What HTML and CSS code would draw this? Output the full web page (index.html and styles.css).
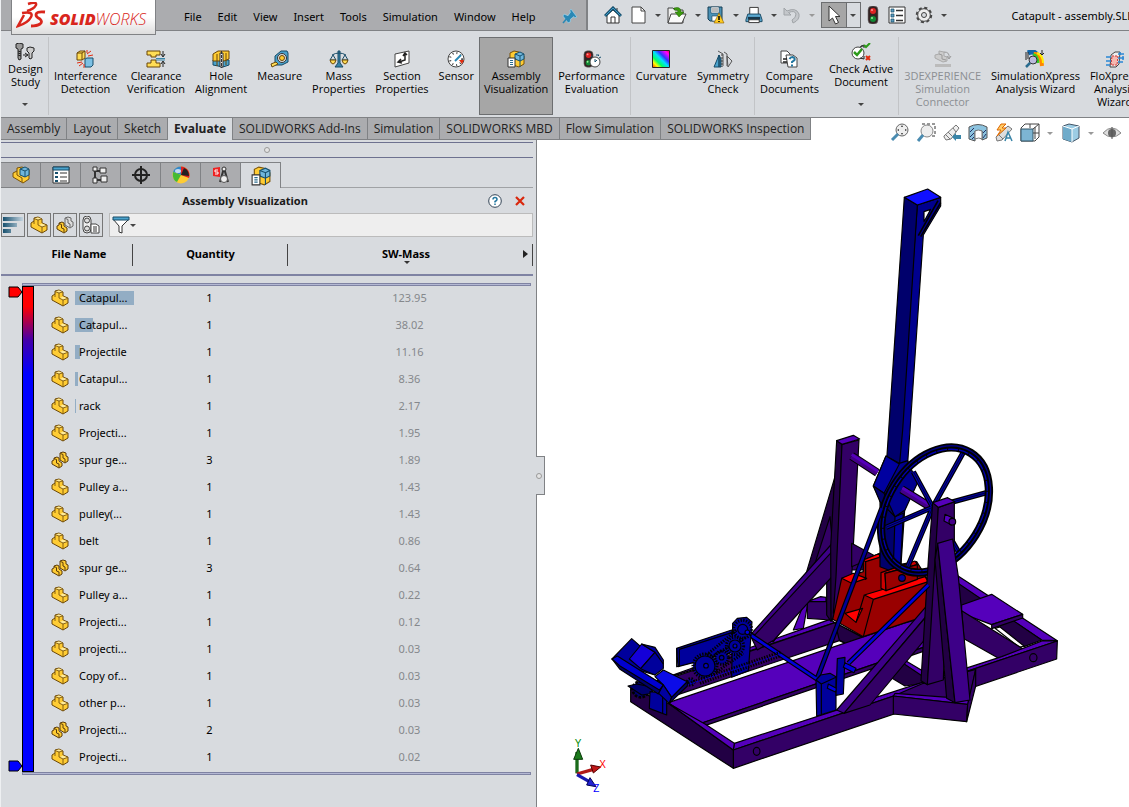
FILE: index.html
```html
<!DOCTYPE html>
<html lang="en">
<head>
    <meta charset="UTF-8">
    <title>Catapult - assembly</title>
    <link rel="stylesheet" href="styles.css">
</head>
<body>

<!-- shared icons -->
<svg class="defs" aria-hidden="true">
    <symbol id="part" viewBox="0 0 18 18">
        <path d="M1 7l3-2V2l4-1 4 2v4l5 2v5l-5 3L1 11z" fill="#fc3" stroke="#6b4708" stroke-linejoin="round"/>
        <path d="M4 2.500l4-1 3.500 1.500L8 4z M12 11l-3-2 3-1.500 4.500 2z" fill="#ffeb99"/>
        <path d="M4 2.500L8 4v5l4 2v5.500M8 4l3.500-1M12 11l4.500-1.500M4 5v3" fill="none" stroke="#6b4708" stroke-width=".8"/>
    </symbol>
    <symbol id="parts" viewBox="0 0 18 18">
        <path d="M9 5V2l3-1 3 1v3l2 1v4l-3 2-5-3z" fill="#fc3" stroke="#5c3c08"/>
        <path d="M1 10l2-1V7l3-1 2 1v3l3 2v3l-3 2-7-4z" fill="#fc3" stroke="#5c3c08"/>
        <path d="M3 7.500l2.500 1V12L8 13v3M9.500 2.500l2.500 1V7l2 1v3" fill="none" stroke="#5c3c08"/>
    </symbol>
    <symbol id="assembly" viewBox="0 0 18 18">
        <path d="M1 7l4-2V2l5-1 7 3v9l-6 4L1 11z" fill="#fc3" stroke="#7a5208"/>
        <path d="M5 5v4l5 3v4" fill="none" stroke="#7a5208"/>
        <path d="M8 3l5-2 4 2v6l-4 2-5-2z" fill="#6fb6dc" stroke="#17506e"/>
        <path d="M8 3l5 2 4-2M13 5v6" fill="none" stroke="#17506e"/>
    </symbol>
    <symbol id="visual" viewBox="0 0 18 18">
        <path d="M3 8V3l4-2 5 1 5 4v8l-5 3-6-2z" fill="#fc3" stroke="#7a5208"/>
        <path d="M8 4l5-2 4 2v5l-4 2-5-2z" fill="#6fb6dc" stroke="#17506e"/>
        <path d="M8 4l5 2 4-2M13 6v11" fill="none" stroke="#17506e"/>
        <path d="M1 8h7v9H1z" fill="#fff" stroke="#333"/>
        <path d="M3 10.500h3M3 12.500h3M3 14.500h3" stroke="#2a6c8f"/>
    </symbol>
    <symbol id="list" viewBox="0 0 18 18">
        <path d="M1 1h16v16H1z" fill="#fff" stroke="#333"/>
        <path d="M3 3h3v3H3zM3 8h3v3H3zM3 13h3v3H3z" fill="#5b9bc0" stroke="#164a66" stroke-width=".7"/>
        <path d="M8 4.500h7M8 9.500h7M8 14.500h7" stroke="#333" stroke-width="1.300"/>
    </symbol>
    <symbol id="light" viewBox="0 0 12 18">
        <rect x="1" y="0" width="10" height="18" rx="4" fill="#322" stroke="#777" stroke-width=".6"/>
        <circle cx="6" cy="5" r="3" fill="#d22"/><circle cx="5" cy="4" r="1" fill="#f99"/>
        <circle cx="6" cy="13" r="3" fill="#183"/><circle cx="5" cy="12" r="1" fill="#9e9"/>
    </symbol>
</svg>

<div class="app">
    <header class="titlebar">
        <nav class="menu">
            <a class="logo" href="#">
                <svg width="32" height="30" viewBox="0 0 32 30" fill="none" stroke="#d9261c" aria-hidden="true">
                    <path d="M12 2Q21 -1 20 3Q18 7 11 9" stroke-width="2.500"/>
                    <path d="M6 11Q18 9 15 15Q12 21 2 24L8 13" stroke-width="2.500"/>
                    <path d="M29 10Q20 9 20 13Q20 15 24 17Q27 20 24 22Q21 24 15 24" stroke-width="2.800"/>
                </svg>
                <span class="wordmark"><b>SOLID</b>WORKS</span>
            </a>
            <a href="#">File</a><a href="#">Edit</a><a href="#">View</a><a href="#">Insert</a><a href="#">Tools</a><a href="#">Simulation</a><a href="#">Window</a><a href="#">Help</a>
            <button class="pin" aria-label="Pin menu">
                <svg width="16" height="16" viewBox="0 0 16 16"><path d="M8 1l7 7-2 1-1-1-3 3v3l-2 1-6-6 1-2 4 1 2-4-1-1z" transform="rotate(8 8 8)" fill="#2a88b5" stroke="#9fdcf5" stroke-width=".6"/><path d="M1 15l5-6" stroke="#2a88b5" stroke-width="1.500"/></svg>
            </button>
        </nav>
        <div class="quick">
            <button aria-label="Home"><svg width="18" height="18" viewBox="0 0 18 18"><path d="M3 9v8h12V9L9 4z" fill="#fff" stroke="#333"/><path d="M7 17v-6h4v6M13 2v4" fill="none" stroke="#333"/><path d="M1 10l8-8 8 8" fill="none" stroke="#17506e" stroke-width="3"/><path d="M1.500 9.500L9 2l7.500 7.500" fill="none" stroke="#3c9bc9"/></svg></button>
            <button class="drop" aria-label="New"><svg width="16" height="18" viewBox="0 0 16 18"><path d="M1 1h9l4 4v12H1z" fill="#fff" stroke="#444"/><path d="M10 1v4h4" fill="none" stroke="#444"/></svg></button>
            <button class="drop" aria-label="Open"><svg width="20" height="18" viewBox="0 0 20 18"><path d="M1 17V2h5l2 2h8v13z" fill="#eee" stroke="#444"/><path d="M4 8h15l-4 9H1z" fill="#fafafa" stroke="#444"/><path d="M7 2q7-2 7 4h3l-5 5-4-5h3q0-3-4-2z" fill="#3b9b0c" stroke="#1d5c04" stroke-width=".5"/></svg></button>
            <button class="drop" aria-label="Save"><svg width="18" height="18" viewBox="0 0 18 18"><path d="M1 1h14v14H3l-2-2z" fill="#4a91b5" stroke="#173e55"/><path d="M4 1h8v6H4zM5 10h6v5H5z" fill="#fff" stroke="#173e55" stroke-width=".6"/><path d="M5 3h6M5 5h6" stroke="#777"/><path d="M12 7l5 10H7z" fill="#fc2" stroke="#8c5d00" stroke-width=".6"/><path d="M12 10v4M12 15v1" stroke="#000" stroke-width="1.500"/></svg></button>
            <button class="drop" aria-label="Print"><svg width="18" height="18" viewBox="0 0 19 18"><path d="M5 8V1h9v7" fill="#fff" stroke="#333"/><path d="M1 14l2-6h13l2 6v2H1z" fill="#5ba9d0" stroke="#174760"/><path d="M3 11h13v3H3z" fill="#17384c"/><path d="M4 14h11v3H4z" fill="#fff" stroke="#333"/></svg></button>
            <button class="drop off" aria-label="Undo"><svg width="18" height="18" viewBox="0 0 18 18"><path d="M1 2v7h7L5.500 6.500Q12 4 13 8q0 4-4 6l1 3q7-3 6-9Q13 1 4 5z" fill="#c4c7cb" stroke="#a0a4a8"/></svg></button>
            <button class="drop select" aria-label="Select"><svg width="16" height="20" viewBox="0 0 16 20"><path d="M3 1v15l3.500-3 3 6 3-1.500-3-6H14z" fill="#fff" stroke="#333"/></svg></button>
            <button aria-label="Rebuild"><svg width="12" height="18"><use href="#light"/></svg></button>
            <button aria-label="File properties"><svg width="18" height="18"><use href="#list"/></svg></button>
            <button class="drop" aria-label="Options"><svg width="18" height="18" viewBox="0 0 18 18"><circle cx="9" cy="9" r="7" fill="none" stroke="#444" stroke-width="2.500" stroke-dasharray="3 2.500"/><circle cx="9" cy="9" r="6.300" fill="#eee" stroke="#444"/><circle cx="9" cy="9" r="2.500" fill="#d8dbdf" stroke="#444"/></svg></button>
        </div>
        <span class="doc">Catapult - assembly.SLD</span>
    </header>

    <div class="ribbon">
        <button class="tool more"><svg width="20" height="18" viewBox="0 0 20 18"><path d="M1 1l3-1 4 1v4L6 6v10l-2 1-1-2V6L1 5z" fill="#999" stroke="#222"/><path d="M12 5l3-1 4 1v3l-2 2v5l-2 1-1-1v-5l-2-2z" fill="#ccc" stroke="#222"/><path d="M3 8l3 1M3 10l3 1M3 12l3 1M8 12h5M10 10l3 2-3 2" fill="none" stroke="#222"/></svg><span>Design<br>Study</span></button>
        <i class="sep"></i>
        <button class="tool"><svg width="18" height="18" viewBox="0 0 18 18"><path d="M1 3l3-2h5v7l-3 2H1z" fill="#fd5" stroke="#6b4708"/><path d="M9 9l2-1h6v7l-2 2H9z" fill="#7cc0e4" stroke="#174f6c"/><path d="M1 3h5v7M6 3l3-2" fill="none" stroke="#6b4708"/><path d="M12 6l5-1M11 4l4-3M11 3V0M6 12l-5 1M7 13l-4 3M8 14v4" stroke="#e22c10"/></svg><span>Interference<br>Detection</span></button>
        <button class="tool"><svg width="20" height="18" viewBox="0 0 20 18"><path d="M1 1h13v4h-4v2H5V5H1zM1 17h13v-4h-4v-3H5v3H1z" fill="#fd5" stroke="#6b4708"/><path d="M10 8.500h9M10 10h9" stroke="#3a85a8"/><path d="M17 1v5M17 12v5M15 4l2 3 2-3M15 14l2-3 2 3" fill="none" stroke="#222"/></svg><span>Clearance<br>Verification</span></button>
        <button class="tool"><svg width="18" height="18" viewBox="0 0 18 18"><path d="M1 10h16v5l-6 2-10-2z" fill="#4ba3cd" stroke="#164a66"/><path d="M1 4l5-3h11v8l-5 2H1z" fill="#fc3" stroke="#6b4708"/><path d="M5 4v12M14 3v12" stroke="#6b4708"/><path d="M8 3h3v14H8z" fill="#eee" stroke="#333"/><path d="M9.500 1v17" stroke="#333" stroke-dasharray="3 1"/></svg><span>Hole<br>Alignment</span></button>
        <button class="tool"><svg width="20" height="18" viewBox="0 0 20 18"><path d="M5 6l6-5h6l1 2v9l-6 3H5z" fill="#4ba3cd" stroke="#164a66"/><circle cx="12" cy="8" r="4.500" fill="#ddd" stroke="#333"/><circle cx="12" cy="8" r="2.500" fill="#fc3" stroke="#6b4708"/><path d="M1 14l5-2 2 2-6 3z" fill="#fd5" stroke="#6b4708"/></svg><span>Measure</span></button>
        <button class="tool"><svg width="20" height="18" viewBox="0 0 20 18"><path d="M9 1h2v12l3 4H6l3-4z" fill="#3a85a8" stroke="#164a66"/><path d="M3 5q7-4 14 0M4 5L1 10h6zM16 5l-3 5h6z" fill="none" stroke="#164a66"/><path d="M1 10h6q-1 4-3 4t-3-4zM13 10h6q-1 4-3 4t-3-4z" fill="#fd5" stroke="#6b4708"/></svg><span>Mass<br>Properties</span></button>
        <button class="tool"><svg width="18" height="18" viewBox="0 0 18 18"><path d="M2 4l14-3v12L2 17z" fill="#fff" stroke="#444"/><path d="M12 4v6l-6 2M10 6l2-3 2 2M8 9l-3 3 4 1" fill="none" stroke="#222" stroke-width="1.500"/></svg><span>Section<br>Properties</span></button>
        <button class="tool"><svg width="18" height="18" viewBox="0 0 18 18"><circle cx="9" cy="9" r="8" fill="#fff" stroke="#444"/><circle cx="9" cy="9" r="6" fill="none" stroke="#444" stroke-width="2" stroke-dasharray="1 3"/><path d="M12 10h5l-2 4z" fill="#e22c10"/><path d="M8 11l6-6" stroke="#2a88b5" stroke-width="2"/></svg><span>Sensor</span></button>
        <button class="tool on"><svg width="20" height="18"><use href="#visual"/></svg><span>Assembly<br>Visualization</span></button>
        <button class="tool"><svg width="18" height="18" viewBox="0 0 18 18"><svg x="0" y="0" width="11" height="18"><use href="#light"/></svg><circle cx="12" cy="12" r="5" fill="#fff" stroke="#444"/><path d="M12 9v3l2-2M9 7L8 6M15 6l1-1h-3M16 8l2-1" fill="none" stroke="#17506e"/></svg><span>Performance<br>Evaluation</span></button>
        <i class="sep"></i>
        <button class="tool"><svg width="18" height="18" viewBox="0 0 18 18"><defs><linearGradient id="rainbow" x1="1" y1="0" x2="0" y2="1"><stop offset="0" stop-color="#f03"/><stop offset=".15" stop-color="#f0f"/><stop offset=".35" stop-color="#33f"/><stop offset=".5" stop-color="#0df"/><stop offset=".68" stop-color="#0f6"/><stop offset=".82" stop-color="#ff0"/><stop offset="1" stop-color="#f30"/></linearGradient></defs><path d="M.5.500h17v17H.5z" fill="url(#rainbow)" stroke="#222"/></svg><span>Curvature</span></button>
        <button class="tool"><svg width="20" height="18" viewBox="0 0 20 18"><path d="M1 17l5-12v12z" fill="#4ba3cd" stroke="#164a66"/><path d="M6 5l2 4v8H6z" fill="#2a6c8f" stroke="#164a66"/><path d="M9 4v13" stroke="#333" stroke-dasharray="2 1"/><path d="M5 1l5 3v12M11 2l3 2v12M14 6l5 5-4 6z" fill="none" stroke="#555"/></svg><span>Symmetry<br>Check</span></button>
        <i class="sep"></i>
        <button class="tool"><svg width="18" height="18" viewBox="0 0 18 18"><path d="M1 1h6l3 3v9H1z" fill="#fff" stroke="#444"/><path d="M6 5h7l4 3v9H8z" fill="#fff" stroke="#444"/><path d="M3 9h4M3 12h4" stroke="#222" stroke-width="1.500"/><path d="M9.500 9q1-2 3-2 3 1 2 3l-2.500 2v1M12 14.500v2" fill="none" stroke="#2377a0" stroke-width="2"/></svg><span>Compare<br>Documents</span></button>
        <button class="tool more"><svg width="20" height="18" viewBox="0 0 20 18"><circle cx="7" cy="10" r="6" fill="#fff" stroke="#444"/><path d="M3 9l3 3 5-6" fill="none" stroke="#2c9a1a" stroke-width="2.500"/><path d="M9 4l4-2M10 3h3v2M9 15l4 1v-3" fill="none" stroke="#222"/><path d="M13 2l2 2 4-4" fill="none" stroke="#2c9a1a" stroke-width="2"/><path d="M15 13l4 4M19 13l-4 4" stroke="#e22c10" stroke-width="2"/></svg><span>Check Active<br>Document</span></button>
        <i class="sep"></i>
        <button class="tool" disabled><svg width="18" height="18" viewBox="0 0 18 18"><path d="M1 5l4-1V1l5 1v4l3 1v4l-4 1-8-4z" fill="#ccc" stroke="#aaa"/><path d="M5 4l3 1v4l4 1M10 2q6 0 5 6M13 6l2 3 2-3" fill="none" stroke="#999"/><path d="M1 14h16v3H1z" fill="#bbb"/></svg><span>3DEXPERIENCE<br>Simulation<br>Connector</span></button>
        <button class="tool"><svg width="20" height="18" viewBox="0 0 20 18"><path d="M3 3q6-3 9 2" fill="none" stroke="#16a" stroke-width="5"/><path d="M9 4q7-1 8 12" fill="none" stroke="#f80" stroke-width="4"/><path d="M8 5q4-1 5 8" fill="none" stroke="#3c2" stroke-width="3"/><path d="M12 3q6 2 6 10" fill="none" stroke="#fe0" stroke-width="2"/><path d="M1 2v8M3 2v7M17 0v5M15 3l2 2 2-2" fill="none" stroke="#222"/><circle cx="8" cy="10" r="4" fill="#bbd" stroke="#333"/><path d="M5 13l-4 4" stroke="#2a6c8f" stroke-width="2.500"/></svg><span>SimulationXpress<br>Analysis Wizard</span></button>
        <button class="tool"><svg width="18" height="18" viewBox="0 0 18 18"><path d="M5 5l4-3h5l-1 12-3 3H4z" fill="#eee" stroke="#444"/><path d="M6 6h6l-1 9H5z" fill="#f6b8b0" stroke="#c33" stroke-dasharray="2 1"/><path d="M0 7h5M0 11h5M0 15h4M12 4h6M12 8h6M12 12h5M14 2v3M17 6v4" stroke="#2a88d5" stroke-width="1.500"/></svg><span>FloXpress<br>Analysis<br>Wizard</span></button>
    </div>

    <div class="tabrow">
        <nav class="tabs">
            <a href="#">Assembly</a><a href="#">Layout</a><a href="#">Sketch</a><a href="#" class="current">Evaluate</a><a href="#">SOLIDWORKS Add-Ins</a><a href="#">Simulation</a><a href="#">SOLIDWORKS MBD</a><a href="#">Flow Simulation</a><a href="#">SOLIDWORKS Inspection</a>
        </nav>
        <div class="headsup">
            <button aria-label="Zoom to fit"><svg width="20" height="20" viewBox="0 0 20 20"><circle cx="12" cy="7" r="6" fill="#eee" stroke="#666"/><path d="M12 2l1 2h-2zM12 12l1-2h-2zM7 7l2-1v2zM17 7l-2-1v2z" fill="#333"/><path d="M8 11l-6 6" stroke="#4a8bb0" stroke-width="3"/></svg></button>
            <button aria-label="Zoom to area"><svg width="20" height="20" viewBox="0 0 20 20"><path d="M6 1h13v12h-6" fill="none" stroke="#333" stroke-dasharray="3 2"/><circle cx="11" cy="8" r="6" fill="#eee" stroke="#888"/><path d="M7 12l-5 6" stroke="#4a8bb0" stroke-width="3"/></svg></button>
            <button aria-label="Previous view"><svg width="20" height="20" viewBox="0 0 20 20"><path d="M2 13L14 2l3 3-8 11-5 1-2-3z" fill="#eee" stroke="#777"/><path d="M3 11l5 5M6 9l4 4M11 5l3 4" stroke="#777"/><path d="M10 14l4-4v2h5v4h-5v2z" fill="#3a85a8"/></svg></button>
            <button aria-label="Section view"><svg width="20" height="20" viewBox="0 0 20 20"><path d="M1 4q9-5 18 0v11l-5 2V8H7v10l-6-2z" fill="#8cc3df" stroke="#555"/><path d="M7 8q3-2 7 0v8q-3-2-7 0z" fill="#fff" stroke="#777"/><path d="M2 9l4-4M2 14l4-4M4 16l2-2M15 15l3-4M15 10l3-3" stroke="#236"/></svg></button>
            <button aria-label="Annotation views"><svg width="20" height="20" viewBox="0 0 20 20"><path d="M2 14L14 3l4 3L8 17l-5 1z" fill="#ddd" stroke="#777"/><path d="M4 11l5 5" stroke="#777"/><path d="M7 1L3 7h4l-4 6 9-8H8l4-4z" fill="#fc6" stroke="#d60"/><path d="M11 18l3-9 4 9M12 15h5" fill="none" stroke="#3a85a8" stroke-width="1.500"/></svg></button>
            <button class="drop" aria-label="View orientation"><svg width="20" height="20" viewBox="0 0 20 20"><path d="M5 1h14v13l-4 4H1V5z" fill="#fff" stroke="#444"/><path d="M1 6h12v12H1z" fill="#7db5d3" stroke="#356"/><path d="M13 6l6-5M10 1v4M15 4v12M13 10h6" stroke="#444"/></svg></button>
            <button class="drop" aria-label="Display style"><svg width="20" height="20" viewBox="0 0 20 20"><path d="M2 3l6-2 10 2v12l-7 4-9-3z" fill="#9ccce4" stroke="#456"/><path d="M2 3l9 3v13l-9-3z" fill="#6fabca"/><path d="M2 3l9 3 7-3M11 6v13" fill="none" stroke="#fff"/></svg></button>
            <button class="drop" aria-label="Hide or show items"><svg width="20" height="20" viewBox="0 0 20 20"><path d="M1 10q9-10 18 0-9 8-18 0z" fill="#ddd" stroke="#888"/><circle cx="10" cy="10" r="4" fill="#666"/><path d="M10 4v12" stroke="#555"/></svg></button>
        </div>
    </div>

    <main class="work">
        <section class="panel">
            <div class="grip"><i class="dot"></i></div>
            <div class="ptabs">
                <button aria-label="FeatureManager"><svg width="18" height="18"><use href="#assembly"/></svg></button>
                <button aria-label="PropertyManager"><svg width="18" height="18" viewBox="0 0 18 18"><path d="M1 1h16v16H1z" fill="#fff" stroke="#333"/><path d="M1 1h16v3H1z" fill="#4ba3cd" stroke="#164a66"/><path d="M3 6h3v2H3zM3 10h3v2H3zM3 14h3v2H3z" fill="#17506e"/><path d="M8 7h7M8 11h7M8 15h7" stroke="#333"/></svg></button>
                <button aria-label="ConfigurationManager"><svg width="18" height="18" viewBox="0 0 18 18"><path d="M3 1v16M3 5h5M3 14h6" fill="none" stroke="#333" stroke-width="2"/><path d="M1 1h4v4H1zM8 2h6v5H8zM9 10h6v6H9zM1 12h4v5H1z" fill="#eee" stroke="#333"/></svg></button>
                <button aria-label="DimXpert"><svg width="18" height="18" viewBox="0 0 18 18"><circle cx="9" cy="9" r="6" fill="none" stroke="#222" stroke-width="2"/><path d="M9 0v18M0 9h18" stroke="#222" stroke-width="2"/></svg></button>
                <button aria-label="Display"><svg width="18" height="18" viewBox="0 0 18 18"><circle cx="9" cy="9" r="8.500" fill="#fc3"/><path d="M9 9V.5A8.500 8.500 0 0 0 1 6z" fill="#38c"/><path d="M9 9L9 .5A8.500 8.500 0 0 1 17 12z" fill="#d22"/><path d="M9 9l3-7q5 2 5 8z" fill="#222"/><path d="M9 9l-8-3q-1 8 4 10z" fill="#4b3"/><ellipse cx="6" cy="5" rx="3" ry="2" fill="#fff" opacity=".7"/></svg></button>
                <button aria-label="Costing"><svg width="18" height="18" viewBox="0 0 18 18"><path d="M1 2l7-1v10l-7-1z" fill="#e22"/><path d="M6 4H3v2h3v2H3" fill="none" stroke="#fff"/><path d="M12 2l-4 14M12 2l4 14" stroke="#333" stroke-width="2"/><circle cx="12" cy="3" r="2" fill="#eee" stroke="#333"/><circle cx="12" cy="13" r="3.500" fill="#eee" stroke="#555"/></svg></button>
                <button class="current" aria-label="Assembly Visualization"><svg width="20" height="20"><use href="#visual"/></svg></button>
            </div>
            <div class="ptitle">
                <h1>Assembly Visualization</h1>
                <button aria-label="Help"><svg width="14" height="14" viewBox="0 0 14 14"><circle cx="7" cy="7" r="6.300" fill="#fff" stroke="#345"/><path d="M5 5.500q0-2 2-2t2 2q0 1-2 2v1M7 9.500V11" fill="none" stroke="#2377a0" stroke-width="1.500"/></svg></button>
                <button aria-label="Close"><svg width="10" height="10" viewBox="0 0 10 10"><path d="M1 1l8 8M9 1L1 9" stroke="#d9270c" stroke-width="2.200"/></svg></button>
            </div>
            <div class="ptools">
                <button aria-label="Show value bars"><svg width="20" height="18" viewBox="0 0 20 18"><defs><linearGradient id="fade"><stop offset="0" stop-color="#17506e"/><stop offset="1" stop-color="#c4d4e0"/></linearGradient></defs><path d="M0 1h20v4H0zM0 7h14v4H0zM0 13h8v4H0z" fill="url(#fade)"/></svg></button>
                <button aria-label="Flat view"><svg width="18" height="18"><use href="#part"/></svg></button>
                <button aria-label="Grouped view"><svg width="18" height="18" viewBox="0 0 18 18"><path d="M9 5V2l3-1 3 1v3l2 1v4l-3 2-5-3z" fill="#ddd" stroke="#666"/><path d="M9.500 2.500l2.500 1V7l2 1v3" fill="none" stroke="#666"/><path d="M1 10l2-1V7l3-1 2 1v3l3 2v3l-3 2-7-4z" fill="#fc3" stroke="#5c3c08"/><path d="M3 7.500l2.500 1V12L8 13v3" fill="none" stroke="#5c3c08"/></svg></button>
                <button aria-label="Performance view"><svg width="18" height="18" viewBox="0 0 18 18"><rect x="1" y="0" width="8" height="17" rx="4" fill="#eee" stroke="#444"/><circle cx="5" cy="4.500" r="2.500" fill="#ddd" stroke="#444"/><circle cx="5" cy="12.500" r="2.500" fill="#ddd" stroke="#444"/><path d="M9 8h5l3 2v7H9z" fill="#fff" stroke="#444"/><path d="M11 11h4M11 13h4M11 15h4" stroke="#333"/></svg></button>
                <label class="filter">
                    <svg width="18" height="18" viewBox="0 0 18 18" role="img" aria-label="Filter"><path d="M1 3l6 7v6l3 1v-7l7-7z" fill="#fff" stroke="#333"/><path d="M1 1h16v3H1z" fill="#4ba3cd" stroke="#164a66"/></svg>
                    <i class="caret"></i>
                    <input type="text">
                </label>
            </div>
            <table>
                <thead>
                    <tr><td class="scalecol"></td><th class="namecol">File Name</th><th class="qtycol">Quantity</th><th class="masscol">SW-Mass</th></tr>
                </thead>
                <tbody>
                    <tr><td colspan="4" class="rule"><div></div></td></tr>
                    <tr>
                        <td rowspan="18" class="scale"><div class="bar"><svg class="flag" width="15" height="12" viewBox="0 0 15 12"><path d="M1 1h9l4 5-4 5H1z" fill="red" stroke="#000"/></svg><svg class="flag low" width="15" height="12" viewBox="0 0 15 12"><path d="M1 1h9l4 5-4 5H1z" fill="blue" stroke="#000"/></svg></div></td>
                        <td class="name"><svg width="18" height="18"><use href="#part"/></svg><span style="background-size: 59px 100%">Catapul...</span></td><td>1</td><td class="mass">123.95</td>
                    </tr>
                    <tr><td class="name"><svg width="18" height="18"><use href="#part"/></svg><span style="background-size: 18px 100%">Catapul...</span></td><td>1</td><td class="mass">38.02</td></tr>
                    <tr><td class="name"><svg width="18" height="18"><use href="#part"/></svg><span style="background-size: 5px 100%">Projectile</span></td><td>1</td><td class="mass">11.16</td></tr>
                    <tr><td class="name"><svg width="18" height="18"><use href="#part"/></svg><span style="background-size: 3px 100%">Catapul...</span></td><td>1</td><td class="mass">8.36</td></tr>
                    <tr><td class="name"><svg width="18" height="18"><use href="#part"/></svg><span style="background-size: 1px 100%">rack</span></td><td>1</td><td class="mass">2.17</td></tr>
                    <tr><td class="name"><svg width="18" height="18"><use href="#part"/></svg><span>Projecti...</span></td><td>1</td><td class="mass">1.95</td></tr>
                    <tr><td class="name"><svg width="18" height="18"><use href="#parts"/></svg><span>spur ge...</span></td><td>3</td><td class="mass">1.89</td></tr>
                    <tr><td class="name"><svg width="18" height="18"><use href="#part"/></svg><span>Pulley a...</span></td><td>1</td><td class="mass">1.43</td></tr>
                    <tr><td class="name"><svg width="18" height="18"><use href="#part"/></svg><span>pulley(...</span></td><td>1</td><td class="mass">1.43</td></tr>
                    <tr><td class="name"><svg width="18" height="18"><use href="#part"/></svg><span>belt</span></td><td>1</td><td class="mass">0.86</td></tr>
                    <tr><td class="name"><svg width="18" height="18"><use href="#parts"/></svg><span>spur ge...</span></td><td>3</td><td class="mass">0.64</td></tr>
                    <tr><td class="name"><svg width="18" height="18"><use href="#part"/></svg><span>Pulley a...</span></td><td>1</td><td class="mass">0.22</td></tr>
                    <tr><td class="name"><svg width="18" height="18"><use href="#part"/></svg><span>Projecti...</span></td><td>1</td><td class="mass">0.12</td></tr>
                    <tr><td class="name"><svg width="18" height="18"><use href="#part"/></svg><span>projecti...</span></td><td>1</td><td class="mass">0.03</td></tr>
                    <tr><td class="name"><svg width="18" height="18"><use href="#part"/></svg><span>Copy of...</span></td><td>1</td><td class="mass">0.03</td></tr>
                    <tr><td class="name"><svg width="18" height="18"><use href="#part"/></svg><span>other p...</span></td><td>1</td><td class="mass">0.03</td></tr>
                    <tr><td class="name"><svg width="18" height="18"><use href="#parts"/></svg><span>Projecti...</span></td><td>2</td><td class="mass">0.03</td></tr>
                    <tr><td class="name"><svg width="18" height="18"><use href="#part"/></svg><span>Projecti...</span></td><td>1</td><td class="mass">0.02</td></tr>
                    <tr><td colspan="4" class="rule end"><div></div></td></tr>
                </tbody>
            </table>
            <button class="handle" aria-label="Collapse panel"><i class="dot"></i></button>
        </section>

        <section class="stage">
            <svg class="model" viewBox="1611 420 1776 2001" preserveAspectRatio="xMinYMin meet" role="img" aria-label="Catapult assembly">
                <g stroke="#000" stroke-width="3.500" stroke-linejoin="round">

                    <!-- far rail and far right corner -->
                    <g transform="translate(1800 1680)">
                        <path d="M92 390L690 178L705 188L215 350z" fill="#50b"/>
                        <path d="M150 375L705 188L790 232L740 252L718 242L200 415z" fill="#306"/>
                        <path d="M705 188L830 255L760 262L718 240z" fill="#204"/>
                    </g>
                    <g transform="translate(2460 1680)">
                        <path d="M40 -55L130 -10L130 30L50 30z" fill="#306"/>
                        <path d="M200 270L310 340L310 370L255 378L200 345z" fill="#204"/>
                        <path d="M235 300L262 305L320 340L310 350z" fill="#50b"/>
                        <path d="M405 42L712 242L665 240L412 72z" fill="#50b"/>
                        <path d="M412 68L665 240L612 260L590 245L537 203L420 140z" fill="#204"/>
                        <path d="M525 205L540 201L612 258L598 262z" fill="#fff"/>
                        <path d="M425 135L515 103L608 163L515 194L425 160z" fill="#50b"/>
                        <path d="M515 194L608 163V174L515 206z" fill="#306"/>
                        <path d="M425 152L618 272L545 300L432 236z" fill="#306"/>
                    </g>

                    <!-- deck plank and front rails -->
                    <g transform="translate(2460 1680)">
                        <path d="M-455 428L-363 492L310 262L340 165L250 190z" fill="#50b"/>
                        <path d="M-363 492V503L310 274V262z" fill="#306"/>
                        <path d="M-257 550L545 290L668 242L712 243L-260 570z" fill="#50b"/>
                        <path d="M-260 570L712 243L710 297L-260 625z" fill="#306"/>
                        <path d="M-568 385L-455 430L-260 570V625L-568 425z" fill="#204"/>
                        <path d="M-455 430L-345 492L-257 550L-260 570z" fill="#50b"/>
                        <ellipse cx="-190" cy="574" rx="10" ry="12" fill="#306"/>
                        <ellipse cx="640" cy="293" rx="11" ry="12" fill="#306"/>
                    </g>

                    <!-- far post with its braces -->
                    <g transform="translate(2400 1260)">
                        <path d="M105 170L20 455L-5 530L98 400z" fill="#204"/>
                        <path d="M90 290L45 430L98 375z" fill="#306"/>
                        <path d="M25 540L8 560L-20 630L10 625z" fill="#50b"/>
                        <path d="M22 545L78 540L93 600L22 595z" fill="#306"/>
                        <path d="M22 545L62 530L78 532V545z" fill="#50b"/>
                        <path d="M80 450H106V590L93 604L80 585z" fill="#204"/>
                        <path d="M95 372L108 382L-80 666L-145 640z" fill="#3d0088"/>
                        <path d="M108 382L105 460L-78 660L-128 690L-145 655z" fill="#306"/>
                        <path d="M110 62L126 73L105 590L93 600L92 380z" fill="#204"/>
                        <path d="M126 73L177 60L155 470L100 580L108 470z" fill="#306"/>
                        <path d="M110 62L160 46L179 57L126 73z" fill="#50b"/>
                        <path d="M155 370L225 408L190 425L155 440z" fill="#306"/>
                    </g>

                    <!-- counterweight -->
                    <g transform="translate(2460 1680)">
                        <path d="M38 178L65 55L130 35V0L180 -20L200 20L290 5L325 60V165L130 230z" fill="#900"/>
                        <path d="M65 55L100 40L140 55L95 70z" fill="red"/>
                        <path d="M130 0L180 -20L178 -8L137 5z" fill="red"/>
                        <path d="M75 160L128 145L108 187z" fill="red"/>
                        <path d="M133 105L315 50L325 65L160 118z" fill="red"/>
                        <path d="M160 118L130 230M133 105L108 187M137 5V60" fill="none"/>
                        <path d="M183 38L285 3L292 14L195 40L198 92L183 85z" fill="#c00"/>
                        <path d="M195 40L292 14V58L198 92z" fill="#900"/>
                    </g>

                    <!-- throwing arm -->
                    <g transform="translate(2550 510)">
                        <path d="M202 105L272 82V108L220 195L180 780L173 880H145z" fill="#00008e"/>
                        <path d="M163 82L202 105L158 780L148 890L110 870z" fill="#00006c"/>
                        <path d="M163 82L233 57L272 82L202 105z" fill="#1010ff"/>
                        <path d="M222 125L242 118L222 155z" fill="#fff"/>
                        <path d="M264 92L205 197M272 98L212 200" fill="none" stroke-width="5"/>
                    </g>
                    <g transform="translate(2400 1260)">
                        <path d="M240 230L315 255L303 435L265 450L240 440z" fill="#00006c"/>
                        <path d="M285 290L310 280L302 430L280 440z" fill="#00009c"/>
                        <path d="M258 108L298 130L323 122L352 190L315 270L285 290L240 240L220 198z" fill="#00008e"/>
                        <path d="M258 108L298 132L252 220L220 198z" fill="#0000a0"/>
                        <path d="M220 198L252 220L285 290L240 245z" fill="#00006c"/>
                    </g>

                    <!-- axle and drive wheel -->
                    <g transform="translate(2400 1260)" fill="none">
                        <path d="M155 108L232 158M305 208L390 260" stroke-width="25"/>
                        <path d="M155 108L232 158M305 208L390 260" stroke="#408" stroke-width="19"/>
                        <path d="M155 104L234 154M307 204L392 256" stroke="#50b" stroke-width="8"/>
                        <path d="M398 262L490 97M398 262L340 155M398 262L560 218M398 262L475 395M398 262L318 452M398 262L258 322" stroke-width="16"/>
                        <path d="M398 262L490 97M398 262L340 155M398 262L560 218M398 262L475 395M398 262L318 452M398 262L258 322" stroke="#0000a8" stroke-width="9"/>
                        <path d="M398 262L490 97M398 262L340 155M398 262L560 218M398 262L475 395M398 262L318 452M398 262L258 322" stroke-width="2"/>
                        <ellipse cx="405" cy="270" rx="143" ry="202" transform="rotate(32 405 270)" stroke-width="25"/>
                        <ellipse cx="405" cy="270" rx="148" ry="207" transform="rotate(32 405 270)" stroke="#000080" stroke-width="4"/>
                        <ellipse cx="405" cy="270" rx="138" ry="197" transform="rotate(32 405 270)" stroke="#0000b0" stroke-width="4" stroke-dasharray="30 3"/>
                        <circle cx="306" cy="474" r="10" fill="#00009c"/>
                    </g>

                    <!-- near post, braces and foot -->
                    <g transform="translate(2460 1680)">
                        <path d="M220 408L310 370L467 328L445 432z" fill="#306"/>
                        <path d="M225 400L385 412L445 418V434L220 408z" fill="#50b"/>
                        <path d="M220 408L443 433L440 485L220 462z" fill="#306"/>
                        <path d="M443 433L467 328V378L440 485z" fill="#306"/>
                        <path d="M50 450L318 140L335 150L72 460z" fill="#3d0088"/>
                        <path d="M72 460L335 150L330 220L150 435z" fill="#306"/>
                        <path d="M338 -172L355 -158L345 60L322 374L303 362L325 0z" fill="#204"/>
                        <path d="M355 -158L403 -175V-60L380 60L370 360L322 374L345 0z" fill="#306"/>
                        <path d="M353 -50L345 0L380 415L405 428z" fill="#204"/>
                        <path d="M353 -50L398 -63L415 50L450 420L405 428z" fill="#3d0088"/>
                        <path d="M338 -172L383 -187L405 -175L355 -158z" fill="#50b"/>
                        <path d="M375 -137L400 -125L395 -105L372 -117z" fill="#50b"/>
                        <circle cx="397" cy="-115" r="10" fill="#408"/>
                    </g>

                    <!-- belts and release rods -->
                    <g fill="none">
                        <path d="M2645 1525L2450 2040M2785 1755L2545 1990M2240 1897L2455 2040" stroke-width="15"/>
                        <path d="M2645 1525L2450 2040" stroke="#000098" stroke-width="8"/>
                        <path d="M2785 1755L2545 1990M2240 1897L2455 2040" stroke="#0000dc" stroke-width="8"/>
                    </g>
                    <g transform="translate(1800 1680)" fill="#00009c">
                        <path d="M648 360L662 345L690 340L708 350V450L650 468z"/>
                        <path d="M664 372V462M648 360L664 372L708 352" fill="none"/>
                        <path d="M685 372L712 386L706 396L682 385z" fill="#0000dc"/>
                        <path d="M712 296L735 292L730 402L708 406z"/>
                        <path d="M735 308L768 325L762 338L730 322z" fill="#0000dc"/>
                    </g>

                    <!-- gear train -->
                    <g transform="translate(1800 1680)" fill="#00009c">
                        <path d="M230 265L395 210L405 275L234 320z"/>
                        <path d="M230 265V320L238 318V268L395 218" fill="none"/>
                        <path d="M398 190L412 175L440 172L456 186L445 332L395 352z"/>
                        <g stroke-width="9" stroke-dasharray="4 4">
                            <circle cx="428" cy="208" r="27"/>
                            <circle cx="405" cy="258" r="26"/>
                            <circle cx="365" cy="293" r="20"/>
                            <circle cx="315" cy="318" r="36"/>
                            <circle cx="272" cy="366" r="10"/>
                            <path d="M265 370L545 275M300 370L540 288M320 285L410 210M335 290L440 230M350 335L430 280" fill="none"/>
                        </g>
                        <path d="M260 375L545 282" stroke="#00c" stroke-dasharray="6 4"/>
                        <circle cx="428" cy="208" r="15"/><circle cx="405" cy="258" r="18"/><circle cx="315" cy="318" r="30"/>
                        <circle cx="405" cy="258" r="6" fill="#00c"/><circle cx="318" cy="317" r="7" fill="#00c"/><circle cx="365" cy="293" r="7"/><circle cx="442" cy="217" r="7" fill="#00d"/>
                    </g>

                    <!-- projectile sling cup -->
                    <g transform="translate(1800 1680)" fill="#00009c">
                        <circle cx="122" cy="388" r="24" fill="#00006c" stroke-width="8" stroke-dasharray="8 4"/>
                        <path d="M84 378L110 372L150 380L160 400L125 405z" fill="#00006c"/>
                        <path d="M150 395L200 400V465L148 445z"/>
                        <path d="M188 405V460" fill="none"/>
                        <path d="M36 297L95 236L125 262L165 345L80 320z"/>
                        <path d="M36 297L60 328L175 402L190 375L60 300z" fill="#00006c"/>
                        <path d="M88 297L125 252L165 277L122 326z" fill="#1400d8"/>
                        <path d="M125 252L165 262L190 300V325L165 345L122 326L165 277z" fill="#00009c"/>
                        <path d="M165 277L190 312" fill="none"/>
                        <path d="M190 330L262 365L215 412L190 375L165 350z" fill="#0c0ce8"/>
                        <path d="M36 297L52 288L190 375L178 390L60 318z" fill="#0000d0"/>
                        <path d="M190 375L215 412L208 430L176 400z" fill="#0000a0"/>
                        <path d="M215 412L262 365V378L208 430z" fill="#00006c"/>
                    </g>
                </g>

                <!-- axis triad -->
                <g class="triad">
                    <path d="M1731 2320L1731 2256" stroke="#1b6b1b" stroke-width="10"/>
                    <path d="M1721 2278L1735 2245L1748 2278z" fill="#1b7a1b" stroke="#0a3a0a" stroke-width="3"/>
                    <path d="M1731 2322L1780 2308" stroke="#b01818" stroke-width="10"/>
                    <path d="M1772 2295L1802 2301L1780 2319z" fill="#c01818" stroke="#500" stroke-width="3"/>
                    <path d="M1731 2324L1768 2345" stroke="#1818b0" stroke-width="10"/>
                    <path d="M1770 2333L1788 2360L1760 2355z" fill="#2222d0" stroke="#005" stroke-width="3"/>
                    <text x="1724" y="2241" fill="#080">Y</text>
                    <text x="1798" y="2304" fill="red">X</text>
                    <text x="1780" y="2376" fill="blue">Z</text>
                </g>
            </svg>
        </section>
    </main>
</div>

</body>
</html>
```
FILE: styles.css
```css
* {
    box-sizing: border-box;
}
body {
    margin: 0;
    font-family: "Noto Sans", "Open Sans", sans-serif;
    font-size: 11px;
    line-height: 13px;
    color: #000;
    background-color: #fff;
    overflow: hidden;
}
a {
    color: inherit;
    text-decoration: none;
}
button {
    font: inherit;
    color: inherit;
    background: none;
    border: 0;
    padding: 0;
    cursor: pointer;
}
svg {
    display: block;
    flex: none;
}
.defs {
    position: absolute;
    width: 0;
    height: 0;
}
.app {
    display: flex;
    flex-direction: column;
    min-height: 100vh;
    border-left: 1px solid #eef0f2;
}

/* title bar */
.titlebar {
    display: flex;
    align-items: stretch;
    height: 31px;
    background-color: #d8dbdf;
    border-bottom: 1px solid #808285;
    white-space: nowrap;
}
.menu {
    display: flex;
    align-items: center;
    gap: 16px;
    padding: 2px 8px 0 183px;
    background-color: #abacaf;
    border-right: 2px solid #808285;
    position: relative;
}
.logo {
    position: absolute;
    left: 10px;
    top: -1px;
    z-index: 2;
    display: flex;
    align-items: center;
    width: 145px;
    height: 36px;
    padding-left: 4px;
    border: 1px solid #808285;
    background: linear-gradient(#fff, #fff 50%, #ddd);
    color: #d9261c;
}
.wordmark {
    font-family: "Open Sans", sans-serif;
    font-size: 16px;
    font-style: italic;
    font-weight: 300;
    padding: 5px 0 0 2px;
}
.wordmark b {
    font-weight: 800;
}
.pin {
    margin-left: 10px;
}
.quick {
    display: flex;
    align-items: center;
    gap: 6px;
    padding-left: 16px;
}
.quick button:not(.drop) {
    margin-right: 3px;
}
.drop {
    display: flex;
    align-items: center;
    gap: 8px;
}
.drop::after,
.caret {
    content: "";
    border: 3px solid transparent;
    border-top-color: #444;
    border-bottom: 0;
}
.off::after {
    border-top-color: #999;
}
.select {
    height: 26px;
    padding: 0 4px;
    border: 1px solid #6c6e70;
    background: linear-gradient(90deg, #a6a6a6 24px, #6c6e70 24px, #6c6e70 25px, #d8dbdf 25px);
}
.doc {
    flex: 1;
    min-width: 0;
    padding: 9px 0 0 65px;
}

/* ribbon */
.ribbon {
    display: flex;
    height: 87px;
    padding: 6px 0 0 2px;
    font-family: "Open Sans", "Noto Sans", sans-serif;
    background-color: #d8dbdf;
    border-bottom: 1px solid #808285;
    overflow: hidden;
}
.tool {
    display: flex;
    flex-direction: column;
    align-items: center;
    flex: none;
    gap: 1px;
    height: 78px;
    padding: 13px 5px 0;
    white-space: nowrap;
}
.tool.on {
    padding: 12px 4px 0;
    border: 1px solid #6c6e70;
    background-color: #a6a6a6;
}
.tool.more {
    padding-top: 6px;
}
.tool.more::after {
    content: "";
    margin-top: 14px;
    border: 3px solid transparent;
    border-top-color: #444;
    border-bottom: 0;
}
.tool:disabled {
    color: #8c8f93;
}
.sep {
    flex: none;
    width: 1px;
    height: 78px;
    background-color: #c2c4c7;
}

/* command tabs and view toolbar */
.tabrow {
    display: flex;
    height: 22px;
}
.tabs {
    display: flex;
    font-family: "Open Sans", "Noto Sans", sans-serif;
    font-size: 12px;
    line-height: 21px;
    color: #222;
    background-color: #abacaf;
    border-bottom: 1px solid #808285;
    white-space: nowrap;
}
.tabs a {
    padding: 0 6px;
    border-right: 1px solid #808285;
}
.tabs .current {
    background-color: #d8dbdf;
    font-weight: bold;
    height: 22px;
}
.headsup {
    display: flex;
    gap: 6px;
    margin-left: auto;
    margin-right: -8px;
    padding-top: 5px;
    position: relative;
    z-index: 1;
}
.headsup .drop {
    height: 20px;
    gap: 7px;
    margin-right: 2px;
}
.headsup .drop::after {
    border-top-color: #999;
}

/* assembly panel */
.work {
    display: flex;
    flex: 1;
}
.panel {
    position: relative;
    flex: none;
    width: 536px;
    padding: 2px 3px 0 0;
    background-color: #d8dbdf;
    border-right: 1px solid #808285;
}
.grip {
    display: flex;
    justify-content: center;
    align-items: center;
    height: 16px;
    border-top: 1px solid #6d718f;
    border-bottom: 1px solid #6d718f;
}
.dot {
    width: 6px;
    height: 6px;
    border: 1px solid #999;
    border-radius: 50%;
    background-color: #e4e4e4;
}
.ptabs {
    display: flex;
    height: 26px;
    margin-top: 4px;
    border-bottom: 1px solid #a0a2a5;
}
.ptabs button {
    display: flex;
    justify-content: center;
    align-items: center;
    width: 40px;
    height: 26px;
    border: 1px solid #808285;
    border-left: 0;
    background-color: #abacaf;
}
.ptabs .current {
    background-color: #d8dbdf;
    border-bottom: 0;
}
.ptitle {
    display: flex;
    align-items: center;
    gap: 13px;
    height: 25px;
    padding: 0 8px 0 14px;
}
.ptitle h1 {
    flex: 1;
    margin: 0;
    font-size: 11px;
    text-align: center;
    color: #1a1a1a;
}
.ptools {
    display: flex;
    gap: 2px;
}
.ptools button {
    display: flex;
    justify-content: center;
    align-items: center;
    width: 24px;
    height: 24px;
    border: 1px solid #777;
}
.filter {
    display: flex;
    align-items: center;
    flex: 1;
    margin-left: 4px;
    padding-left: 2px;
    border: 1px solid #bbb;
    background-color: #eee;
}
.filter input {
    flex: 1;
    height: 20px;
    border: 0;
    background: none;
    outline: none;
}
table {
    width: 100%;
    table-layout: fixed;
    border-collapse: collapse;
}
thead th,
thead td {
    height: 38px;
    padding: 0 0 4px;
    border-bottom: 2px solid #7f83a3;
}
thead th {
    background: linear-gradient(#444, #444) right 7px / 1px 22px no-repeat;
    position: relative;
}
.scalecol {
    width: 24px;
}
.namecol {
    width: 108px;
}
.qtycol {
    width: 155px;
}
th.masscol {
    padding-right: 9px;
}
.masscol::before {
    content: "";
    position: absolute;
    right: 5px;
    top: 13px;
    border: 4px solid transparent;
    border-left: 5px solid #222;
    border-right: 0;
}
.masscol::after {
    content: "";
    position: absolute;
    left: calc(50% - 7px);
    top: 24px;
    border: 3px solid transparent;
    border-top-color: #333;
    border-bottom: 0;
}
tbody td {
    height: 27px;
    padding: 0 2px 4px 0;
    text-align: center;
}
tbody .rule {
    height: 11px;
    padding: 7px 2px 0 21px;
}
tbody .rule.end {
    height: 3px;
    padding-top: 0;
}
.rule div {
    height: 3px;
    border: 1px solid #7f83a3;
    background-color: #b4b8d4;
}
.name svg,
.name span {
    display: inline-block;
    vertical-align: middle;
}
tbody .name {
    padding-left: 26px;
    text-align: left;
    white-space: nowrap;
}
.name span {
    width: 59px;
    margin-left: 6px;
    padding-left: 4px;
    line-height: 14px;
    background: linear-gradient(#93adc4, #93adc4) no-repeat;
    background-size: 0 100%;
}
tbody .mass {
    padding-right: 2px;
    color: #85888c;
}
tbody .scale {
    padding: 0;
}
.scale .bar {
    position: relative;
    width: 12px;
    height: 486px;
    margin-left: 21px;
    border: 1px solid #000;
    background: linear-gradient(red 4%, #40a 11%, blue 18%);
}
.flag {
    position: absolute;
    right: 10px;
    top: -1px;
}
.flag.low {
    top: auto;
    bottom: -1px;
}
.handle {
    position: absolute;
    left: 535px;
    top: 316px;
    display: flex;
    align-items: center;
    width: 9px;
    height: 39px;
    border: 1px solid #808285;
    border-left: 0;
    background-color: #d8dbdf;
}

/* graphics area */
.stage {
    flex: 1;
    min-width: 0;
}
.model {
    width: 100%;
}
.triad text {
    font-family: "Liberation Sans", sans-serif;
    font-size: 30px;
}
```
